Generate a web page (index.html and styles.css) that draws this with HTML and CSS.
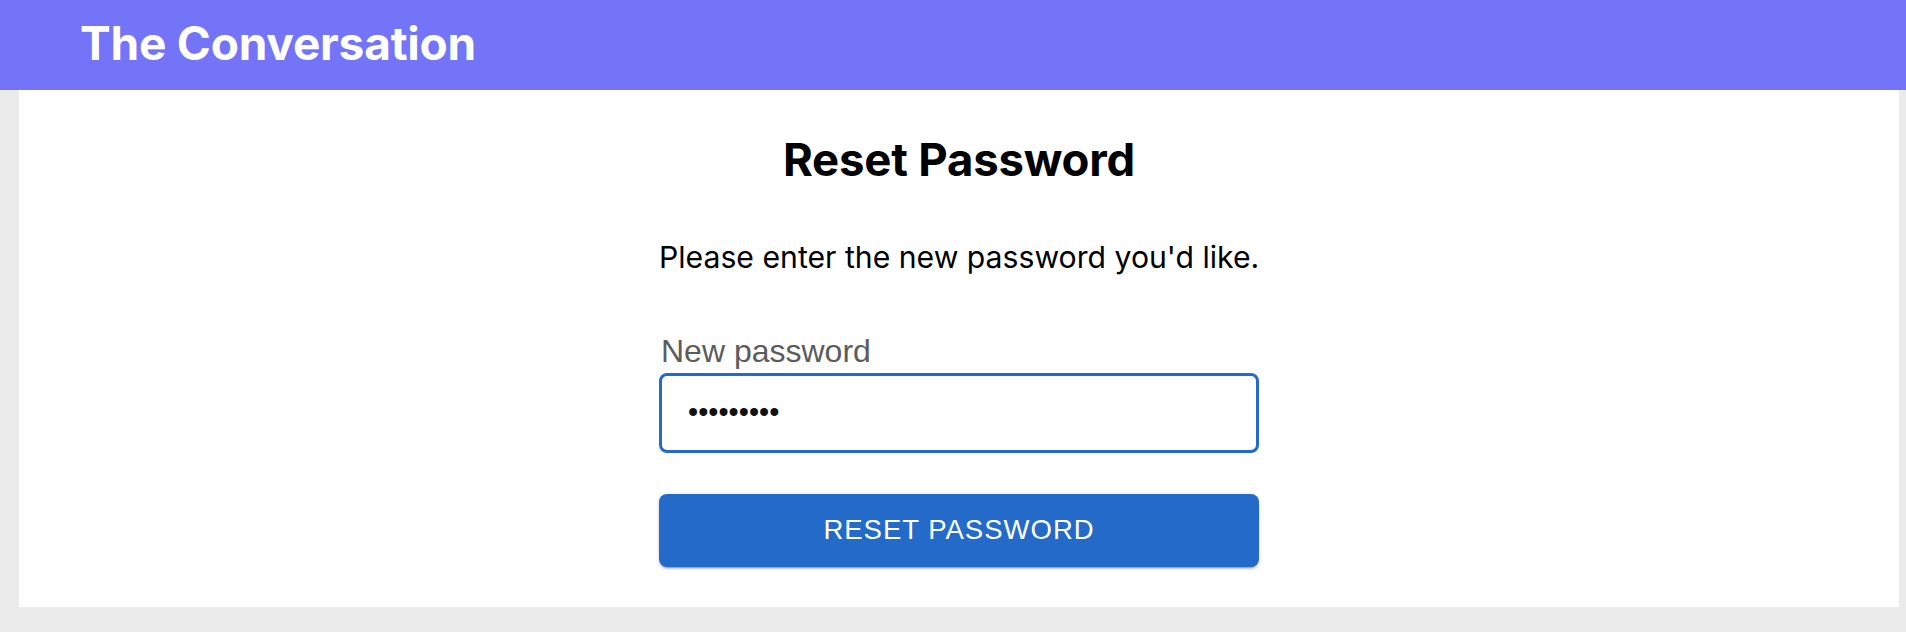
FILE: index.html
```html
<!DOCTYPE html>
<html lang="en">
<head>
<meta charset="utf-8">
<title>The Conversation - Reset Password</title>
<link rel="stylesheet" href="styles.css">
</head>
<body>
<header class="topbar">
  <h1 class="brand">The Conversation</h1>
</header>
<main class="page">
  <section class="card">
    <form class="reset-form">
      <h2 class="title">Reset Password</h2>
      <p class="intro">Please enter the new password you'd like.</p>
      <label class="field-label" for="pw">New password</label>
      <input class="field-input" id="pw" type="password" value="password1">
      <button class="submit" type="button">Reset Password</button>
    </form>
  </section>
</main>
</body>
</html>
```
FILE: styles.css
```css
* { box-sizing: border-box; }
html, body { margin: 0; padding: 0; }
body {
  background: #ebebeb;
  font-family: Inter, "Noto Sans", sans-serif;
  color: #000;
  height: 632px;
  overflow: hidden;
}
.topbar {
  height: 90px;
  background: #7474f8;
  display: flex;
  align-items: center;
  padding-left: 80px;
}
.brand {
  margin: 0;
  color: #fff;
  font-size: 46px;
  font-weight: 700;
  line-height: 1.2;
  letter-spacing: -0.2px;
  margin-top: -2px;
}
.page {
  padding: 0 7px 25px 19px;
}
.card {
  background: #fff;
  padding: 43px 0 40px;
  display: flex;
  justify-content: center;
}
.reset-form {
  width: 600px;
  display: flex;
  flex-direction: column;
}
.title {
  margin: 0;
  text-align: center;
  font-size: 45.5px;
  font-weight: 700;
  line-height: 1.2;
  letter-spacing: -0.2px;
}
.intro {
  margin: 51px 0 0;
  font-size: 30.2px;
  line-height: 37px;
  white-space: nowrap;
  text-align: center;
}
.field-label {
  margin-top: 57px;
  font-family: "Liberation Sans", Arial, sans-serif;
  font-size: 32px;
  line-height: 37px;
  color: #5c5c5c;
  padding-left: 2px;
}
.field-input {
  margin-top: 3px;
  height: 80px;
  width: 100%;
  border: 3px solid #246ac8;
  border-radius: 8px;
  padding: 0 26px;
  font-family: "Liberation Sans", Arial, sans-serif;
  font-size: 29px;
  color: #111;
  outline: none;
  background: #fff;
}
.submit {
  margin-top: 41px;
  height: 73px;
  width: 100%;
  border: none;
  border-radius: 8px;
  background: #246ac8;
  color: #fff;
  font-family: "Liberation Sans", Arial, sans-serif;
  font-size: 27.5px;
  letter-spacing: 1px;
  text-transform: uppercase;
  box-shadow: 0 3px 1px -2px rgba(0,0,0,0.2), 0 2px 2px 0 rgba(0,0,0,0.14), 0 1px 5px 0 rgba(0,0,0,0.12);
  cursor: pointer;
}
```
